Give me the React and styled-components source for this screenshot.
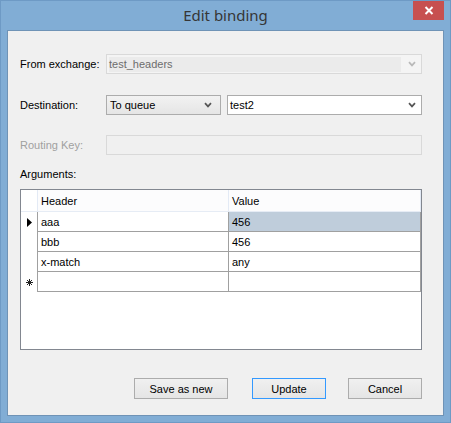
import React from "react";
import styled, { createGlobalStyle } from "styled-components";

const GlobalStyle = createGlobalStyle`
  html, body {
    margin: 0;
    padding: 0;
    background: #80acd4;
    overflow: hidden;
  }
  * { box-sizing: border-box; }
`;

const Window = styled.div`
  width: 451px;
  height: 423px;
  border: 1px solid #6e9ac5;
  background: #81add5;
  display: flex;
  flex-direction: column;
  font-family: "Liberation Sans", Arial, sans-serif;
  font-size: 11px;
  color: #000;
`;

const TitleBar = styled.div`
  height: 29px;
  display: grid;
  grid-template-columns: 1fr auto 1fr;
  align-items: start;
`;

const Title = styled.div`
  grid-column: 2;
  font-family: "Noto Sans", "Open Sans", sans-serif;
  font-size: 15px;
  line-height: 29px;
  color: #363636;
`;

const CloseButton = styled.div`
  grid-column: 3;
  justify-self: end;
  width: 31px;
  height: 19px;
  margin-right: 6px;
  background: #c75050;
  display: flex;
  align-items: center;
  justify-content: center;
`;

const Client = styled.div`
  flex: 1;
  margin: 0 6px 6px 6px;
  border: 1px solid #6f93b6;
  background: #f0f0f0;
  padding: 23px 21px 0 12px;
  display: flex;
  flex-direction: column;
`;

const FieldRow = styled.div`
  display: flex;
  align-items: center;
  height: 20px;
  margin-bottom: ${(p) => p.$gap || 0}px;
`;

const Label = styled.div`
  width: 86px;
  flex: none;
  color: ${(p) => (p.$disabled ? "#a0a0a0" : "#000")};
`;

const Combo = styled.div`
  height: 20px;
  width: ${(p) => (p.$width ? `${p.$width}px` : "auto")};
  flex: ${(p) => (p.$width ? "none" : "1")};
  border: 1px solid ${(p) => (p.$disabled ? "#d9d9d9" : "#acacac")};
  background: ${(p) =>
    p.$flat
      ? "linear-gradient(#f2f2f2, #e5e5e5)"
      : p.$disabled
      ? "#f4f4f4"
      : "#fff"};
  display: flex;
  align-items: center;
  padding: ${(p) => (p.$flat ? "0 8px 0 3px" : "0 5px 0 2px")};
  margin-left: ${(p) => p.$ml || 0}px;
  color: ${(p) => (p.$disabled ? "#6d6d6d" : "#000")};
`;

const ComboText = styled.div`
  flex: 1;
  height: ${(p) => (p.$disabled ? "15px" : "auto")};
  line-height: 15px;
  padding-left: ${(p) => (p.$disabled ? "0" : "0")};
  background: ${(p) => (p.$disabled ? "#ebebeb" : "transparent")};
  margin-right: ${(p) => (p.$disabled ? "7px" : "0")};
`;

const TextBox = styled.div`
  flex: 1;
  height: 20px;
  border: 1px solid #d9d9d9;
  background: #f0f0f0;
`;

const SectionLabel = styled.div`
  margin-top: 13px;
  line-height: 13px;
`;

const Grid = styled.div`
  margin-top: 8px;
  height: 161px;
  border: 1px solid #828790;
  background: #fff;
  display: flex;
  flex-direction: column;
`;

const GridRow = styled.div`
  display: flex;
  height: ${(p) => (p.$header ? 22 : 20)}px;
`;

const RowHead = styled.div`
  width: 16px;
  flex: none;
  display: flex;
  align-items: center;
  justify-content: center;
  border-bottom: ${(p) => (p.$header ? "1px solid #e6ecf5" : "none")};
`;

const HeadCell = styled.div`
  width: 192px;
  flex: none;
  border-left: ${(p) => (p.$first ? "1px solid #e3eaf5" : "none")};
  border-right: 1px solid #e3eaf5;
  border-bottom: 1px solid #e6ecf5;
  padding-left: 3px;
  display: flex;
  align-items: center;
  background: #fcfcfd;
`;

const Cell = styled.div`
  width: 192px;
  flex: none;
  border-left: ${(p) => (p.$first ? "1px solid #a0a0a0" : "none")};
  border-right: 1px solid #a0a0a0;
  border-bottom: 1px solid #a0a0a0;
  padding-left: 3px;
  display: flex;
  align-items: center;
  background: ${(p) => (p.$selected ? "#bfcddb" : "#fff")};
`;

const ButtonRow = styled.div`
  display: flex;
  justify-content: flex-end;
  margin-top: 28px;
`;

const Button = styled.div`
  width: ${(p) => p.$width}px;
  height: 21px;
  margin-left: ${(p) => p.$ml || 0}px;
  border: 1px solid ${(p) => (p.$default ? "#3399ff" : "#acacac")};
  background: linear-gradient(#f0f0f0, #e5e5e5);
  display: flex;
  align-items: center;
  justify-content: center;
`;

const Chevron = ({ color = "#555" }) => (
  <svg width="8" height="6" viewBox="0 0 8 6">
    <path d="M1 1.2 L4 4.4 L7 1.2" fill="none" stroke={color} strokeWidth="1.7" />
  </svg>
);

const CloseIcon = () => (
  <svg width="10" height="9" viewBox="0 0 10 9">
    <path d="M1.5 1 L8.5 8 M8.5 1 L1.5 8" stroke="#fff" strokeWidth="2" />
  </svg>
);

const CurrentRow = () => (
  <svg width="5" height="9" viewBox="0 0 5 9">
    <path d="M0 0 L5 4.5 L0 9 Z" fill="#000" />
  </svg>
);

const NewRow = () => (
  <svg width="7" height="7" viewBox="0 0 7 7">
    <path
      d="M3.5 0 V7 M0 3.5 H7 M1 1 L6 6 M6 1 L1 6"
      stroke="#222"
      strokeWidth="1"
    />
  </svg>
);

const rows = [
  { header: "aaa", value: "456", mark: "current" },
  { header: "bbb", value: "456" },
  { header: "x-match", value: "any" },
  { header: "", value: "", mark: "new" },
];

export default function App() {
  return (
    <>
      <GlobalStyle />
      <Window>
        <TitleBar>
          <Title>Edit binding</Title>
          <CloseButton>
            <CloseIcon />
          </CloseButton>
        </TitleBar>
        <Client>
          <FieldRow $gap={21}>
            <Label>From exchange:</Label>
            <Combo $disabled>
              <ComboText $disabled>test_headers</ComboText>
              <Chevron color="#b9b9b9" />
            </Combo>
          </FieldRow>
          <FieldRow $gap={20}>
            <Label>Destination:</Label>
            <Combo $flat $width={115}>
              <ComboText>To queue</ComboText>
              <Chevron />
            </Combo>
            <Combo $ml={6}>
              <ComboText>test2</ComboText>
              <Chevron />
            </Combo>
          </FieldRow>
          <FieldRow>
            <Label $disabled>Routing Key:</Label>
            <TextBox />
          </FieldRow>
          <SectionLabel>Arguments:</SectionLabel>
          <Grid>
            <GridRow $header>
              <RowHead $header />
              <HeadCell $first>Header</HeadCell>
              <HeadCell>Value</HeadCell>
            </GridRow>
            {rows.map((r, i) => (
              <GridRow key={i}>
                <RowHead>
                  {r.mark === "current" && <CurrentRow />}
                  {r.mark === "new" && <NewRow />}
                </RowHead>
                <Cell $first>{r.header}</Cell>
                <Cell $selected={i === 0}>{r.value}</Cell>
              </GridRow>
            ))}
          </Grid>
          <ButtonRow>
            <Button $width={94}>Save as new</Button>
            <Button $width={74} $ml={24} $default>
              Update
            </Button>
            <Button $width={74} $ml={22}>
              Cancel
            </Button>
          </ButtonRow>
        </Client>
      </Window>
    </>
  );
}
